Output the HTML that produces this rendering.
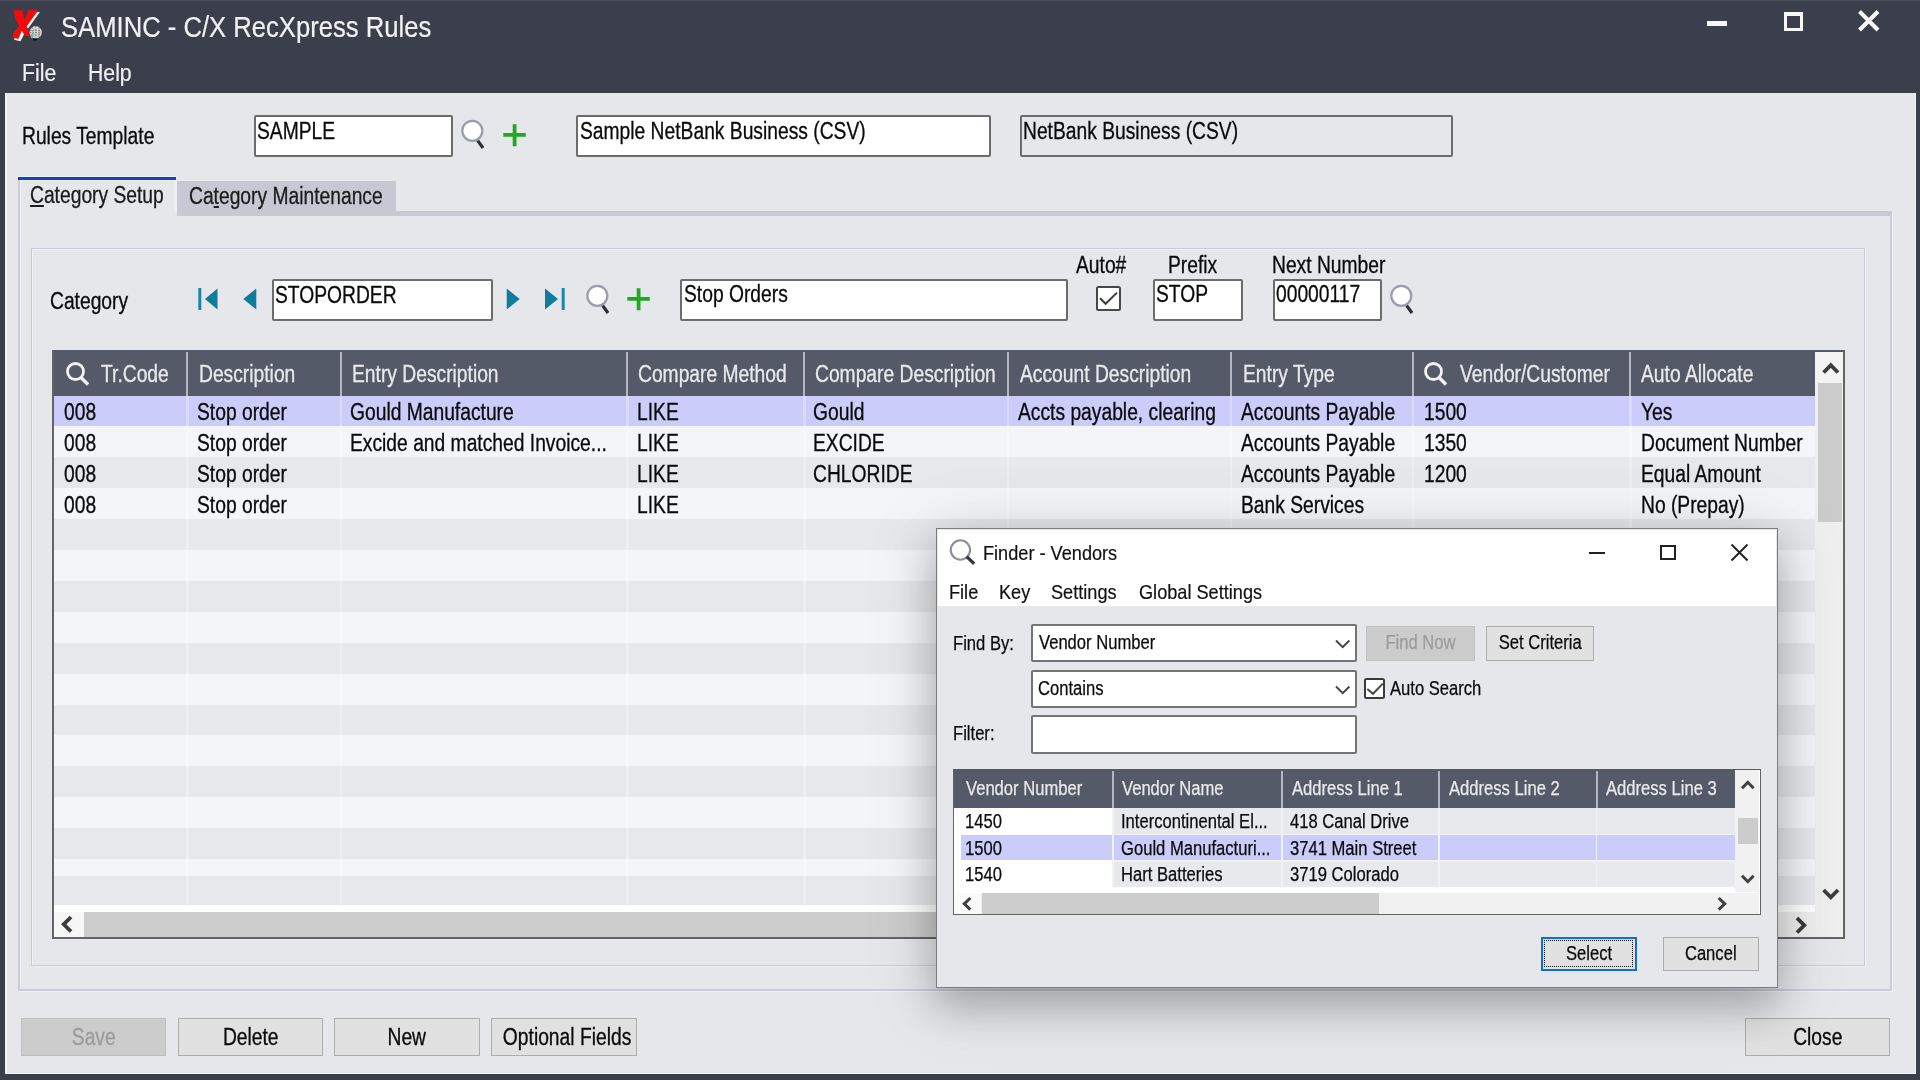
<!DOCTYPE html>
<html>
<head>
<meta charset="utf-8">
<title>SAMINC - C/X RecXpress Rules</title>
<style>
html,body{margin:0;padding:0;}
body{width:1920px;height:1080px;overflow:hidden;background:#e6e7eb;font-family:"Liberation Sans",sans-serif;position:relative;}
.a{position:absolute;}
/* main MS-Sans-like text: tall & narrow */
.t{position:absolute;white-space:nowrap;font-size:23px;line-height:26px;color:#0a0a0a;transform:scaleX(.837);transform-origin:0 50%;margin-top:.3px;-webkit-text-stroke:.3px currentColor;}
.tc{transform-origin:50% 50%;text-align:center;}
/* dialog text */
.d{position:absolute;white-space:nowrap;font-size:20px;line-height:24px;color:#0a0a0a;transform:scaleX(.83);transform-origin:0 50%;-webkit-text-stroke:.25px currentColor;margin-top:-.6px;}
.dc{transform-origin:50% 50%;text-align:center;}
.w{color:#e9e9ec;}
.g{color:#9b9b9b;}
/* segoe-like text */
.s{position:absolute;white-space:nowrap;transform-origin:0 50%;-webkit-text-stroke:.2px currentColor;}
.t,.d,.s,svg{filter:blur(.45px);}
.inp{position:absolute;background:#fff;border:2px solid #6c6c6c;box-sizing:border-box;border-radius:2px;}
.btn{position:absolute;background:#e1e1e1;border:1.5px solid #adadad;box-sizing:border-box;}
.btn.dis{background:#cccccc;border-color:#bfbfbf;}
u{text-decoration:underline;text-underline-offset:2px;text-decoration-thickness:1.5px;}
</style>
</head>
<body>

<!-- ===== title bar / menu ===== -->
<div class="a" id="titlebar" style="left:0;top:0;width:1920px;height:92.5px;background:#3b3f4c;"></div>
<div class="a" style="left:0;top:0;width:1920px;height:1px;background:#4c505c;"></div>
<!-- window borders -->
<div class="a" style="left:0;top:92px;width:5px;height:988px;background:#3b3f4c;"></div>
<div class="a" style="left:1916px;top:92px;width:4px;height:988px;background:#3b3f4c;"></div>
<div class="a" style="left:0;top:1074px;width:1920px;height:6px;background:#3b3f4c;"></div>
<div class="a" style="left:5px;top:92.5px;width:1.5px;height:981px;background:#f2f2f4;"></div>
<div class="a" style="left:1914.5px;top:92.5px;width:1.5px;height:981px;background:#f2f2f4;"></div>
<div class="a" style="left:5px;top:1072.5px;width:1911px;height:1.5px;background:#f2f2f4;"></div>

<!-- app icon -->
<svg class="a" style="left:6px;top:4px" width="48" height="42" viewBox="6 4 48 42">
  <path d="M27.8 10.2L38.3 10.2L26.8 26.3L22 28L13.5 33L12.6 38L18.8 39.5L23 31.5Z" fill="#fff" transform="translate(1.6,1.7)"/>
  <path d="M13.8 10.2L22.3 10.2L24.7 20.3L27.8 10.2L38.3 10.2L26.8 26.3L30.2 37L24.6 35.6L21.8 30.8L18.4 39L12.6 37.8L13 33.2L19.3 26.2L15.2 18.5Z" fill="#f80808"/>
  <circle cx="35.7" cy="32.3" r="6.2" fill="#d6d6d6"/>
  <path d="M30 30.3h11.4M29.7 32.6h12M30 34.9h11.4M32.3 27.3v10M35.7 26.2v12.2M39.1 27.3v10" stroke="#7b7b7b" stroke-width=".9" stroke-dasharray="1.6 1.2"/>
  <circle cx="32" cy="36.8" r="1.5" fill="#35c8c8"/>
  <rect x="33.2" y="38.7" width="4" height="1.7" fill="#050505"/>
</svg>
<div class="s" id="title" style="left:61px;top:10px;font-size:29.8px;line-height:34px;color:#f1f1f3;transform:scaleX(.86);">SAMINC - C/X RecXpress Rules</div>
<div class="s" id="mfile" style="left:22px;top:58.5px;font-size:24.7px;line-height:28px;color:#f1f1f3;transform:scaleX(.86);">File</div>
<div class="s" id="mhelp" style="left:88px;top:58.5px;font-size:24.7px;line-height:28px;color:#f1f1f3;transform:scaleX(.86);">Help</div>

<!-- window controls -->
<div class="a" style="left:1707px;top:21px;width:19.5px;height:4.8px;background:#f7f7f7;"></div>
<div class="a" style="left:1783.7px;top:11.8px;width:19.5px;height:19.7px;border:3px solid #f7f7f7;border-top-width:4.8px;box-sizing:border-box;"></div>
<svg class="a" style="left:1857px;top:9px" width="24" height="24" viewBox="0 0 24 24"><path d="M2.5 2.5L21 21M21 2.5L2.5 21" stroke="#f7f7f7" stroke-width="4"/></svg>

<!-- ===== top row ===== -->
<div class="t" id="lblrules" style="left:22px;top:123px;">Rules Template</div>
<div class="inp" style="left:253.5px;top:114.5px;width:199px;height:42px;"></div>
<div class="t" style="left:257px;top:118px;">SAMPLE</div>
<div class="inp" style="left:576px;top:114.5px;width:415px;height:42px;"></div>
<div class="t" style="left:580px;top:118px;">Sample NetBank Business (CSV)</div>
<div class="inp" style="left:1019.5px;top:114.5px;width:433px;height:42px;background:#e6e7eb;"></div>
<div class="t" style="left:1023px;top:118px;">NetBank Business (CSV)</div>

<!-- magnifier + plus (row 1) -->
<svg class="a mag" style="left:459px;top:118px" width="28" height="32" viewBox="0 0 28 32"><circle cx="13.3" cy="12.8" r="10" fill="#fff" stroke="#9a9da9" stroke-width="2.2"/><path d="M18.7 22.6L24 30" stroke="#2b303b" stroke-width="3.2" stroke-linecap="butt"/></svg>
<svg class="a" style="left:502px;top:123px" width="26" height="25" viewBox="0 0 26 25"><path d="M1.3 11.8H23.8M12.6 1.2V23.3" stroke="#22a722" stroke-width="3.8"/></svg>

<!-- ===== tabs ===== -->
<div class="a" style="left:177px;top:211px;width:1715px;height:5px;background:#c7c9d3;"></div>
<div class="a" style="left:177px;top:181px;width:219px;height:32px;background:#c6c8d4;"></div>
<div class="a" style="left:18.3px;top:175.5px;width:157.5px;height:5.5px;background:#f2f1ee;"></div>
<div class="a" style="left:18.3px;top:176.5px;width:157.5px;height:3.5px;background:#0a47c6;"></div>
<div class="a" style="left:18.3px;top:180px;width:1.5px;height:811px;background:#c9ccd6;"></div>
<div class="a" style="left:19.8px;top:180px;width:1.2px;height:810px;background:#f1f2f5;"></div>
<div class="a" style="left:173.8px;top:180px;width:3px;height:31.5px;background:#eeeff2;"></div>
<div class="a" style="left:1890.3px;top:214px;width:1.5px;height:777px;background:#c9ccd6;"></div>
<div class="a" style="left:1891.8px;top:214px;width:1.2px;height:778px;background:#f1f2f5;"></div>
<div class="a" style="left:18.5px;top:989.3px;width:1873.5px;height:1.5px;background:#c9ccd6;"></div>
<div class="a" style="left:18.5px;top:990.8px;width:1874.5px;height:1.2px;background:#f1f2f5;"></div>
<div class="t" id="tab1" style="left:30px;top:181.5px;color:#1c1c1c;"><u>C</u>ategory Setup</div>
<div class="t" id="tab2" style="left:189px;top:183px;color:#1c1c1c;">Ca<u>t</u>egory Maintenance</div>

<!-- group box -->
<div class="a" style="left:32.3px;top:249.3px;width:1833.5px;height:718px;border:1.3px solid #f1f2f5;box-sizing:border-box;"></div>
<div class="a" style="left:31px;top:248px;width:1833.5px;height:718px;border:1.5px solid #c9ccd6;box-sizing:border-box;"></div>


<!-- ===== category row ===== -->
<div class="t" style="left:50px;top:288px;">Category</div>
<svg class="a" style="left:196px;top:286px" width="24" height="26" viewBox="0 0 24 26"><rect x="2.3" y="2" width="3" height="22" fill="#1b86a6"/><path d="M9 13L21.5 2.5V23.5Z" fill="#0f7c9c"/></svg>
<svg class="a" style="left:241px;top:286px" width="18" height="26" viewBox="0 0 18 26"><path d="M2.3 13L15.3 2.5V23.5Z" fill="#0f7c9c"/></svg>
<div class="inp" style="left:271.5px;top:278.5px;width:221px;height:42.5px;"></div>
<div class="t" style="left:275px;top:281.5px;">STOPORDER</div>
<svg class="a" style="left:504px;top:286px" width="18" height="26" viewBox="0 0 18 26"><path d="M15.7 13L2.7 2.5V23.5Z" fill="#0f7c9c"/></svg>
<svg class="a" style="left:542px;top:286px" width="24" height="26" viewBox="0 0 24 26"><rect x="19.7" y="2" width="3" height="22" fill="#1b86a6"/><path d="M16 13L3 2.5V23.5Z" fill="#0f7c9c"/></svg>
<svg class="a mag" style="left:583.5px;top:282.5px" width="28" height="32" viewBox="0 0 28 32"><circle cx="13.3" cy="12.8" r="10" fill="#fff" stroke="#9a9da9" stroke-width="2.2"/><path d="M18.7 22.6L24 30" stroke="#2b303b" stroke-width="3.2"/></svg>
<svg class="a" style="left:626px;top:287px" width="26" height="25" viewBox="0 0 26 25"><path d="M1.3 11.8H23.8M12.6 1.2V23.3" stroke="#22a722" stroke-width="3.8"/></svg>
<div class="inp" style="left:680px;top:278.5px;width:388px;height:42.5px;"></div>
<div class="t" style="left:683.5px;top:281px;">Stop Orders</div>
<div class="t" style="left:1076px;top:252px;">Auto#</div>
<div class="a" style="left:1096px;top:286px;width:24.5px;height:24.5px;background:#fff;border:2px solid #474747;border-radius:2.5px;box-sizing:border-box;"></div>
<svg class="a" style="left:1096px;top:286px" width="25" height="25" viewBox="0 0 25 25"><path d="M4 12.3L9.6 17.8L21 6.6" fill="none" stroke="#3c3c3c" stroke-width="2"/></svg>
<div class="t" style="left:1167.5px;top:252px;">Prefix</div>
<div class="inp" style="left:1152.5px;top:278.5px;width:90.5px;height:42.5px;"></div>
<div class="t" style="left:1156.3px;top:281px;">STOP</div>
<div class="t" style="left:1272px;top:252px;">Next Number</div>
<div class="inp" style="left:1272.5px;top:278.5px;width:109px;height:42.5px;"></div>
<div class="t" style="left:1276px;top:281px;">00000117</div>
<svg class="a mag" style="left:1388px;top:282.5px" width="28" height="32" viewBox="0 0 28 32"><circle cx="13.3" cy="12.8" r="10" fill="#fff" stroke="#9a9da9" stroke-width="2.2"/><path d="M18.7 22.6L24 30" stroke="#2b303b" stroke-width="3.2"/></svg>

<!-- ===== main grid ===== -->
<div class="a" style="left:53px;top:350px;width:1790px;height:587px;background:#fff;"></div>
<div class="a" style="left:54px;top:395.5px;width:1761px;height:31.0px;background:#ccccfb;"></div>
<div class="a" style="left:54px;top:426.4px;width:1761px;height:31.0px;background:#f4f5f8;"></div>
<div class="a" style="left:54px;top:457.3px;width:1761px;height:31.0px;background:#e7e8eb;"></div>
<div class="a" style="left:54px;top:488.2px;width:1761px;height:31.0px;background:#f4f5f8;"></div>
<div class="a" style="left:54px;top:519.1px;width:1761px;height:31.0px;background:#e7e8eb;"></div>
<div class="a" style="left:54px;top:550.0px;width:1761px;height:31.0px;background:#f4f5f8;"></div>
<div class="a" style="left:54px;top:580.9px;width:1761px;height:31.0px;background:#e7e8eb;"></div>
<div class="a" style="left:54px;top:611.8px;width:1761px;height:31.0px;background:#f4f5f8;"></div>
<div class="a" style="left:54px;top:642.7px;width:1761px;height:31.0px;background:#e7e8eb;"></div>
<div class="a" style="left:54px;top:673.6px;width:1761px;height:31.0px;background:#f4f5f8;"></div>
<div class="a" style="left:54px;top:704.5px;width:1761px;height:31.0px;background:#e7e8eb;"></div>
<div class="a" style="left:54px;top:735.4px;width:1761px;height:31.0px;background:#f4f5f8;"></div>
<div class="a" style="left:54px;top:766.3px;width:1761px;height:31.0px;background:#e7e8eb;"></div>
<div class="a" style="left:54px;top:797.2px;width:1761px;height:31.0px;background:#f4f5f8;"></div>
<div class="a" style="left:54px;top:828.1px;width:1761px;height:31.0px;background:#e7e8eb;"></div>
<div class="a" style="left:54px;top:859.0px;width:1761px;height:16.5px;background:#f4f5f8;"></div>
<div class="a" style="left:54px;top:875.5px;width:1761px;height:29.5px;background:#e7e8eb;"></div>
<div class="a" style="left:186.0px;top:395.5px;width:2.5px;height:510px;background:rgba(255,255,255,.28);"></div>
<div class="a" style="left:339.5px;top:395.5px;width:2.5px;height:510px;background:rgba(255,255,255,.28);"></div>
<div class="a" style="left:626.0px;top:395.5px;width:2.5px;height:510px;background:rgba(255,255,255,.28);"></div>
<div class="a" style="left:803.0px;top:395.5px;width:2.5px;height:510px;background:rgba(255,255,255,.28);"></div>
<div class="a" style="left:1006.5px;top:395.5px;width:2.5px;height:510px;background:rgba(255,255,255,.28);"></div>
<div class="a" style="left:1229.5px;top:395.5px;width:2.5px;height:510px;background:rgba(255,255,255,.28);"></div>
<div class="a" style="left:1411.5px;top:395.5px;width:2.5px;height:510px;background:rgba(255,255,255,.28);"></div>
<div class="a" style="left:1629.0px;top:395.5px;width:2.5px;height:510px;background:rgba(255,255,255,.28);"></div>
<div class="a" style="left:52px;top:350px;width:1763px;height:45.5px;background:#555a68;"></div>
<div class="a" style="left:186.0px;top:352px;width:2.2px;height:43.5px;background:#b4b7c1;"></div>
<div class="a" style="left:339.5px;top:352px;width:2.2px;height:43.5px;background:#b4b7c1;"></div>
<div class="a" style="left:626.0px;top:352px;width:2.2px;height:43.5px;background:#b4b7c1;"></div>
<div class="a" style="left:803.0px;top:352px;width:2.2px;height:43.5px;background:#b4b7c1;"></div>
<div class="a" style="left:1006.5px;top:352px;width:2.2px;height:43.5px;background:#b4b7c1;"></div>
<div class="a" style="left:1229.5px;top:352px;width:2.2px;height:43.5px;background:#b4b7c1;"></div>
<div class="a" style="left:1411.5px;top:352px;width:2.2px;height:43.5px;background:#b4b7c1;"></div>
<div class="a" style="left:1629.0px;top:352px;width:2.2px;height:43.5px;background:#b4b7c1;"></div>
<div class="a" style="left:1815px;top:351px;width:27.5px;height:561px;background:#efefef;"></div>
<div class="a" style="left:1815px;top:351px;width:27.5px;height:32px;background:#f3f3f3;"></div>
<div class="a" style="left:1817.5px;top:382.5px;width:24.5px;height:139.5px;background:#cbcbcb;"></div>
<svg class="a" style="left:1821px;top:361px" width="20" height="14" viewBox="0 0 20 14"><path d="M2.6 11.5L9.8 4.2L17 11.5" fill="none" stroke="#3c3c3c" stroke-width="3.8"/></svg>
<svg class="a" style="left:1821px;top:887px" width="20" height="14" viewBox="0 0 20 14"><path d="M2.6 3L9.8 10.3L17 3" fill="none" stroke="#3c3c3c" stroke-width="3.8"/></svg>
<div class="a" style="left:54px;top:911.5px;width:1788.5px;height:25px;background:#efefef;"></div>
<div class="a" style="left:54px;top:911.5px;width:30px;height:25px;background:#f7f7f7;"></div>
<div class="a" style="left:84px;top:912px;width:1688px;height:24.5px;background:#cdcdcd;"></div>
<svg class="a" style="left:60px;top:914px" width="14" height="20" viewBox="0 0 14 20"><path d="M11 3L3.7 10.3L11 17.5" fill="none" stroke="#3c3c3c" stroke-width="3.8"/></svg>
<svg class="a" style="left:1794px;top:915px" width="14" height="20" viewBox="0 0 14 20"><path d="M3 3L10.3 10.3L3 17.5" fill="none" stroke="#3c3c3c" stroke-width="3.8"/></svg>
<div class="a" style="left:51.5px;top:350px;width:1793px;height:589px;border:2.3px solid #646466;border-top-color:#555a68;box-sizing:border-box;"></div>
<div class="t w" style="left:101px;top:361px;">Tr.Code</div>
<div class="t w" style="left:199px;top:361px;">Description</div>
<div class="t w" style="left:352px;top:361px;">Entry Description</div>
<div class="t w" style="left:637.5px;top:361px;">Compare Method</div>
<div class="t w" style="left:814.5px;top:361px;">Compare Description</div>
<div class="t w" style="left:1020px;top:361px;">Account Description</div>
<div class="t w" style="left:1242.5px;top:361px;">Entry Type</div>
<div class="t w" style="left:1459.5px;top:361px;">Vendor/Customer</div>
<div class="t w" style="left:1641px;top:361px;">Auto Allocate</div>
<svg class="a" style="left:65px;top:361px" width="26" height="26" viewBox="0 0 26 26"><circle cx="10.5" cy="10.5" r="8" fill="none" stroke="#f2f2f2" stroke-width="2.8"/><path d="M16 16.5L23 23.5" stroke="#f2f2f2" stroke-width="3.4"/></svg>
<svg class="a" style="left:1423px;top:361px" width="26" height="26" viewBox="0 0 26 26"><circle cx="10.5" cy="10.5" r="8" fill="none" stroke="#f2f2f2" stroke-width="2.8"/><path d="M16 16.5L23 23.5" stroke="#f2f2f2" stroke-width="3.4"/></svg>
<div class="t" style="left:64px;top:399.0px;">008</div>
<div class="t" style="left:197px;top:399.0px;">Stop order</div>
<div class="t" style="left:350px;top:399.0px;">Gould Manufacture</div>
<div class="t" style="left:637px;top:399.0px;">LIKE</div>
<div class="t" style="left:813px;top:399.0px;">Gould</div>
<div class="t" style="left:1018px;top:399.0px;">Accts payable, clearing</div>
<div class="t" style="left:1240.5px;top:399.0px;">Accounts Payable</div>
<div class="t" style="left:1424px;top:399.0px;">1500</div>
<div class="t" style="left:1641px;top:399.0px;">Yes</div>
<div class="t" style="left:64px;top:429.9px;">008</div>
<div class="t" style="left:197px;top:429.9px;">Stop order</div>
<div class="t" style="left:350px;top:429.9px;">Excide and matched Invoice...</div>
<div class="t" style="left:637px;top:429.9px;">LIKE</div>
<div class="t" style="left:813px;top:429.9px;">EXCIDE</div>
<div class="t" style="left:1240.5px;top:429.9px;">Accounts Payable</div>
<div class="t" style="left:1424px;top:429.9px;">1350</div>
<div class="t" style="left:1641px;top:429.9px;">Document Number</div>
<div class="t" style="left:64px;top:460.8px;">008</div>
<div class="t" style="left:197px;top:460.8px;">Stop order</div>
<div class="t" style="left:637px;top:460.8px;">LIKE</div>
<div class="t" style="left:813px;top:460.8px;">CHLORIDE</div>
<div class="t" style="left:1240.5px;top:460.8px;">Accounts Payable</div>
<div class="t" style="left:1424px;top:460.8px;">1200</div>
<div class="t" style="left:1641px;top:460.8px;">Equal Amount</div>
<div class="t" style="left:64px;top:491.7px;">008</div>
<div class="t" style="left:197px;top:491.7px;">Stop order</div>
<div class="t" style="left:637px;top:491.7px;">LIKE</div>
<div class="t" style="left:1240.5px;top:491.7px;">Bank Services</div>
<div class="t" style="left:1641px;top:491.7px;">No (Prepay)</div>

<!-- ===== bottom buttons ===== -->
<div class="btn dis" style="left:20.5px;top:1017.5px;width:145.5px;height:38px;"></div>
<div class="t tc g" style="left:20.5px;top:1024px;width:145.5px;">Save</div>
<div class="btn" style="left:177.5px;top:1017.5px;width:145.5px;height:38px;"></div>
<div class="t tc" style="left:177.5px;top:1024px;width:145.5px;">Delete</div>
<div class="btn" style="left:334px;top:1017.5px;width:145.5px;height:38px;"></div>
<div class="t tc" style="left:334px;top:1024px;width:145.5px;">New</div>
<div class="btn" style="left:491px;top:1017.5px;width:145.5px;height:38px;"></div>
<div class="t tc" style="left:491px;top:1024px;width:145.5px;">Optional Fields</div>
<div class="btn" style="left:1744.5px;top:1017.5px;width:145.5px;height:38px;"></div>
<div class="t tc" style="left:1744.5px;top:1024px;width:145.5px;">Close</div>



<!-- ===== Finder dialog ===== -->
<div class="a" id="dlg" style="left:936px;top:528px;width:841.5px;height:460px;background:#e6e7eb;border:1.5px solid #7d7d80;box-sizing:border-box;box-shadow:0 17px 38px 1px rgba(0,0,0,.25), 0 8px 70px 8px rgba(0,0,0,.09);"></div>
<div class="a" style="left:937.5px;top:529.5px;width:838.5px;height:76px;background:#fff;"></div>
<svg class="a" style="left:947px;top:537px" width="30" height="30" viewBox="0 0 30 30"><circle cx="13.4" cy="13" r="9.7" fill="none" stroke="#8c8f99" stroke-width="2.1"/><path d="M19.6 19.6L27.2 26.7" stroke="#343843" stroke-width="3.3"/></svg>
<div class="s" id="dtitle" style="left:983px;top:541px;font-size:20.3px;line-height:24px;color:#111;transform:scaleX(.895);">Finder - Vendors</div>
<div class="a" style="left:1589px;top:551.5px;width:16px;height:2px;background:#222;"></div>
<div class="a" style="left:1660px;top:544.5px;width:15.5px;height:15.5px;border:2px solid #222;box-sizing:border-box;"></div>
<svg class="a" style="left:1729px;top:542px" width="21" height="21" viewBox="0 0 21 21"><path d="M2.5 2.5L18.5 18.5M18.5 2.5L2.5 18.5" stroke="#222" stroke-width="1.9"/></svg>
<div class="s" style="left:949px;top:580px;font-size:20.3px;line-height:24px;color:#111;transform:scaleX(.895);">File</div>
<div class="s" style="left:999px;top:580px;font-size:20.3px;line-height:24px;color:#111;transform:scaleX(.895);">Key</div>
<div class="s" style="left:1050.5px;top:580px;font-size:20.3px;line-height:24px;color:#111;transform:scaleX(.895);">Settings</div>
<div class="s" style="left:1139px;top:580px;font-size:20.3px;line-height:24px;color:#111;transform:scaleX(.895);">Global Settings</div>

<div class="d" style="left:953px;top:631.5px;">Find By:</div>
<div class="inp" style="left:1031px;top:624px;width:326px;height:38px;border:2px solid #747474;"></div>
<div class="d" style="left:1039px;top:631px;">Vendor Number</div>
<svg class="a" style="left:1334px;top:638px" width="18" height="12" viewBox="0 0 18 12"><path d="M2 2.5L8.7 9.2L15.4 2.5" fill="none" stroke="#444" stroke-width="1.9"/></svg>
<div class="btn dis" style="left:1365.5px;top:625.5px;width:109px;height:35px;"></div>
<div class="d dc g" style="left:1365.5px;top:631px;width:109px;">Find Now</div>
<div class="btn" style="left:1485.5px;top:625.5px;width:108.5px;height:35px;"></div>
<div class="d dc" style="left:1485.5px;top:631px;width:108.5px;">Set Criteria</div>

<div class="inp" style="left:1031px;top:669.5px;width:326px;height:38px;border:2px solid #747474;"></div>
<div class="d" style="left:1038px;top:676.5px;">Contains</div>
<svg class="a" style="left:1334px;top:684px" width="18" height="12" viewBox="0 0 18 12"><path d="M2 2.5L8.7 9.2L15.4 2.5" fill="none" stroke="#444" stroke-width="1.9"/></svg>
<div class="a" style="left:1364px;top:677.5px;width:21px;height:21px;background:#fff;border:2px solid #3a3a3a;border-radius:2.5px;box-sizing:border-box;"></div>
<svg class="a" style="left:1364px;top:677.5px" width="21" height="21" viewBox="0 0 21 21"><path d="M3.3 11L9 15.8L18.8 5.6" fill="none" stroke="#484848" stroke-width="2"/></svg>
<div class="d" style="left:1389.5px;top:676.5px;">Auto Search</div>

<div class="d" style="left:953px;top:722px;">Filter:</div>
<div class="inp" style="left:1031px;top:715px;width:326px;height:38.5px;border:2px solid #747474;"></div>

<div class="a" style="left:953px;top:768.5px;width:807.5px;height:146.5px;background:#fff;"></div>
<div class="a" style="left:1112px;top:807px;width:623px;height:80px;background:#f1f2f4;"></div>
<div class="a" style="left:955px;top:807.5px;width:157px;height:26.2px;background:#fff;"></div>
<div class="a" style="left:1113.5px;top:807.5px;width:167.5px;height:26.2px;background:#e8e9ec;"></div>
<div class="a" style="left:1282.5px;top:807.5px;width:155.5px;height:26.2px;background:#e8e9ec;"></div>
<div class="a" style="left:1439.5px;top:807.5px;width:156.0px;height:26.2px;background:#e8e9ec;"></div>
<div class="a" style="left:1597px;top:807.5px;width:138px;height:26.2px;background:#e8e9ec;"></div>
<div class="a" style="left:960.5px;top:835.2px;width:151.5px;height:25.2px;background:#ccccfb;"></div>
<div class="a" style="left:1113.5px;top:835.2px;width:167.5px;height:25.2px;background:#ccccfb;"></div>
<div class="a" style="left:1282.5px;top:835.2px;width:155.5px;height:25.2px;background:#ccccfb;"></div>
<div class="a" style="left:1439.5px;top:835.2px;width:156.0px;height:25.2px;background:#ccccfb;"></div>
<div class="a" style="left:1597px;top:835.2px;width:138px;height:25.2px;background:#ccccfb;"></div>
<div class="a" style="left:955px;top:861.8px;width:157px;height:25.2px;background:#fff;"></div>
<div class="a" style="left:1113.5px;top:861.8px;width:167.5px;height:25.2px;background:#e8e9ec;"></div>
<div class="a" style="left:1282.5px;top:861.8px;width:155.5px;height:25.2px;background:#e8e9ec;"></div>
<div class="a" style="left:1439.5px;top:861.8px;width:156.0px;height:25.2px;background:#e8e9ec;"></div>
<div class="a" style="left:1597px;top:861.8px;width:138px;height:25.2px;background:#e8e9ec;"></div>
<div class="a" style="left:953px;top:768.5px;width:782px;height:39px;background:#555a68;"></div>
<div class="a" style="left:1112px;top:770.5px;width:2px;height:37px;background:#b4b7c1;"></div>
<div class="a" style="left:1281.2px;top:770.5px;width:2px;height:37px;background:#b4b7c1;"></div>
<div class="a" style="left:1438.3px;top:770.5px;width:2px;height:37px;background:#b4b7c1;"></div>
<div class="a" style="left:1595.8px;top:770.5px;width:2px;height:37px;background:#b4b7c1;"></div>
<div class="d w" style="left:965.5px;top:776.5px;">Vendor Number</div>
<div class="d w" style="left:1122px;top:776.5px;">Vendor Name</div>
<div class="d w" style="left:1291.5px;top:776.5px;">Address Line 1</div>
<div class="d w" style="left:1449px;top:776.5px;">Address Line 2</div>
<div class="d w" style="left:1606px;top:776.5px;">Address Line 3</div>
<div class="d" style="left:964.5px;top:809.7px;">1450</div>
<div class="d" style="left:1120.5px;top:809.7px;">Intercontinental El...</div>
<div class="d" style="left:1290px;top:809.7px;">418 Canal Drive</div>
<div class="d" style="left:964.5px;top:836.4px;">1500</div>
<div class="d" style="left:1120.5px;top:836.4px;">Gould Manufacturi...</div>
<div class="d" style="left:1290px;top:836.4px;">3741 Main Street</div>
<div class="d" style="left:964.5px;top:863.0px;">1540</div>
<div class="d" style="left:1120.5px;top:863.0px;">Hart Batteries</div>
<div class="d" style="left:1290px;top:863.0px;">3719 Colorado</div>
<div class="a" style="left:1735px;top:770px;width:24px;height:122px;background:#f1f1f1;"></div>
<div class="a" style="left:1737.5px;top:817.5px;width:20px;height:26.5px;background:#cbcbcb;"></div>
<svg class="a" style="left:1740px;top:779px" width="16" height="12" viewBox="0 0 16 12"><path d="M2 9.3L7.8 3.3L13.6 9.3" fill="none" stroke="#404040" stroke-width="3"/></svg>
<svg class="a" style="left:1740px;top:872.5px" width="16" height="12" viewBox="0 0 16 12"><path d="M2 2.7L7.8 8.7L13.6 2.7" fill="none" stroke="#404040" stroke-width="3"/></svg>
<div class="a" style="left:955px;top:892.5px;width:804px;height:21px;background:#f1f1f1;"></div>
<div class="a" style="left:955px;top:892.5px;width:26px;height:21px;background:#fafafa;"></div>
<div class="a" style="left:981.5px;top:893px;width:397.5px;height:20.5px;background:#cdcdcd;"></div>
<svg class="a" style="left:961px;top:896px" width="12" height="16" viewBox="0 0 12 16"><path d="M9.3 2L3.3 7.8L9.3 13.6" fill="none" stroke="#404040" stroke-width="3"/></svg>
<svg class="a" style="left:1716px;top:896px" width="12" height="16" viewBox="0 0 12 16"><path d="M2.7 2L8.7 7.8L2.7 13.6" fill="none" stroke="#404040" stroke-width="3"/></svg>
<div class="a" style="left:953px;top:768.5px;width:807.5px;height:146.5px;border:1.8px solid #646466;border-top-color:#555a68;box-sizing:border-box;"></div>

<div class="btn" style="left:1540.5px;top:936.5px;width:96px;height:34px;border:2.8px solid #0b6edb;"></div>
<div class="a" style="left:1544px;top:940px;width:89px;height:27px;border:1.3px dotted #111;box-sizing:border-box;"></div>
<div class="d dc" style="left:1540.5px;top:941.8px;width:96px;">Select</div>
<div class="btn" style="left:1663px;top:936.5px;width:95.5px;height:34px;"></div>
<div class="d dc" style="left:1663px;top:941.8px;width:95.5px;">Cancel</div>



</body>
</html>
